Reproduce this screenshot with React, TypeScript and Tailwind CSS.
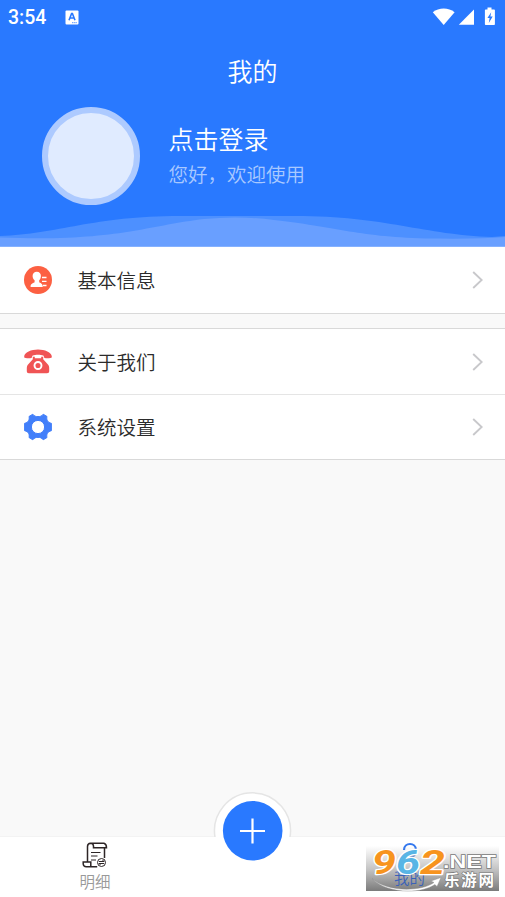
import React from 'react';

const cjk = "font-['Noto_Sans_CJK_SC',sans-serif] font-[350]";

function StatusBar() {
  return (
    <div className="flex h-[35px] items-center pl-[8px] pr-[9px]">
      <span className="w-[57px] font-['Roboto',sans-serif] text-[19.5px] font-medium leading-[35px]">3:54</span>
      <svg className="-mt-px" width="14" height="15" viewBox="0 0 14 15">
        <rect x="0.5" y="0.5" width="13" height="14" rx="1" fill="#fff" />
        <path d="M4 10.2 6.6 3.5h.8L10 10.2M5 8h4" fill="none" stroke="#2979ff" strokeWidth="1.6" />
        <path d="M7 12.7h5" stroke="#2979ff" strokeWidth="0.8" strokeDasharray="1.5 .6" />
      </svg>
      <svg className="-mt-[2px] ml-auto" width="64" height="20" viewBox="0 0 64 20">
        <path d="M0.8 5.2C7 .4 16.4 .4 22.6 5.2L11.7 17.9Z" fill="#fff" />
        <path d="M26.8 17.8H42V2.4Z" fill="#fff" />
        <path d="M55.5 .5h4v2h2.600a.8.8 0 0 1 .8.8v14a.8.8 0 0 1-.8.8h-8.400a.8.8 0 0 1-.8-.8V3.300a.8.8 0 0 1 .8-.8h1.800Z" fill="#fff" />
        <path d="M59.200 5.300 55.400 11h2.200l-.8 5 3.900-6.500h-2.300Z" fill="#2979ff" />
      </svg>
    </div>
  );
}

function Waves() {
  return (
    <svg className="mt-auto block" width="505" height="32" viewBox="0 0 505 32">
      <path d="M0 21C58 19 93 1 180 1C265 1 225 1 295 1C385 1 425 20 492 22L505 21V32H0Z" fill="#4d90ff" />
      <path d="M0 22.500C115 27 145 11 204 4Q240 .500 274 5C345 13 360 23 440 23.600Q480 24 505 22V32H0Z" fill="#699fff" />
      <path d="M0 31.500H505" stroke="#85b1ff" />
    </svg>
  );
}

function ProfileIcon() {
  return (
    <svg width="28" height="28" viewBox="0 0 28 28">
      <circle cx="14" cy="14" r="14" fill="#fc6042" />
      <path d="M12.800 5.800c2.600 0 4.100 1.800 4.100 4.200 0 1.700-.7 3.400-1.700 4.200v2c.8.800 3.500 1.200 3.500 3.800v1H6.600v-1c0-2.600 3.300-3 4-3.800v-2c-1.200-.8-2-2.500-2-4.200 0-2.400 1.600-4.200 4.200-4.200Z" fill="#fff" />
      <path d="M18 11.500h4.500M18 15.300h4.500M19 19.500h3.500" stroke="#fff" strokeWidth="1.300" />
    </svg>
  );
}

function PhoneIcon() {
  return (
    <svg width="28" height="28" viewBox="0 0 28 28">
      <path d="M.3 9.500C-.8 4.500 7 1.400 14 1.400S28.800 4.500 27.700 9.500c-.2.700-5.500 1-7 .4-1.300-.5-.3-2-1.500-2.500-2.400-1-8-1-10.400 0-1.200.5-.2 2-1.500 2.500-1.500.6-6.800.3-7-.4Z" fill="#f05455" />
      <path d="M8.800 8.700h2v1.500h6.400V8.700h2v2.500l4.500 5c1 1.200 1.500 2 1.500 4v2.800c0 1.500-.7 2.200-2.200 2.200H5c-1.500 0-2.200-.7-2.200-2.200v-2.800c0-2 .5-2.800 1.500-4l4.500-5Z" fill="#f05455" />
      <circle cx="14" cy="17.500" r="3.500" fill="none" stroke="#fff" strokeWidth="1.900" />
    </svg>
  );
}

function GearIcon() {
  return (
    <svg className="-mt-px" width="28" height="28" viewBox="0 0 28 28">
      <path fillRule="evenodd" strokeLinejoin="round" strokeWidth="1" stroke="#427ffa" d="M5 3.500 8.800 1.200c1.500 2 2.800 2.400 5.200 2.400s3.700-.4 5.200-2.400L23 3.500c-.8 3.400.6 6 4.400 6.800v7.400c-3.800.8-5.200 3.400-4.400 6.800l-3.800 2.300c-1.500-2-2.800-2.400-5.200-2.400s-3.700.4-5.200 2.400L5 24.500c.8-3.400-.6-6-4.400-6.800v-7.400C4.400 9.500 5.800 6.900 5 3.500ZM20.600 14a6.600 6.600 0 1 0-13.200 0 6.600 6.600 0 0 0 13.200 0Z" fill="#427ffa" />
    </svg>
  );
}

function Row({ icon, label, className }: { icon: React.ReactNode; label: string; className: string }) {
  return (
    <div className={'flex items-center bg-white pl-6 pr-[22px] ' + className}>
      {icon}
      <span className="ml-[25.500px] text-[19.500px] leading-7 text-[#2b2b2b]">{label}</span>
      <svg className="ml-auto" width="11" height="18" viewBox="0 0 11 18">
        <path d="M1.200 1 9.700 9 1.200 17" fill="none" stroke="#c8c8cb" strokeWidth="1.900" />
      </svg>
    </div>
  );
}

function ReceiptIcon() {
  return (
    <svg width="26" height="26" viewBox="0 0 26 26" fill="none" stroke="#2d2526" strokeWidth="1.500">
      <path d="M8.500 1.200H22q2.500.8 2.500 4.500H11.500V4Q11.300 1.200 8.500 1.200Q5.500 1.400 5.500 4.500V20H1.200v2q.3 2.700 3 2.700h11M5.500 20h3.300v4M22.500 6v10" />
      <path d="M9 10.500h9.500M9 14h6.500M9 18h5" strokeWidth="1.200" />
      <circle cx="19.500" cy="20.500" r="4" strokeWidth="1" />
      <path d="M17 19.500h5l-1.500-1.500M22 21.500h-5l1.500 1.500" strokeWidth="1" />
    </svg>
  );
}

function Watermark() {
  return (
    <svg className="absolute left-[366px] top-[9px] overflow-visible" width="133" height="45" viewBox="0 0 133 45">
      <defs>
        <linearGradient id="shade" x1="0" y1="0" x2="0" y2="1">
          <stop offset="0" stopColor="#777" stopOpacity="0" />
          <stop offset="0.500" stopColor="#777" stopOpacity=".42" />
          <stop offset="1" stopColor="#747474" stopOpacity=".95" />
        </linearGradient>
      </defs>
      <rect width="133" height="45" fill="url(#shade)" />
      <text x="28" y="38" fontSize="15.500" fill="#3a62b8">我的</text>
      <g fontFamily="Roboto, sans-serif" fontWeight="bold" fontStyle="italic" fontSize="33" stroke="#fff" strokeWidth="2.500" paintOrder="stroke" strokeLinejoin="round">
        <text x="6" y="28" textLength="24" lengthAdjust="spacingAndGlyphs" fill="#f7941e">9</text>
        <text x="30" y="28" textLength="24" lengthAdjust="spacingAndGlyphs" fill="#58b5e5">6</text>
        <text x="54" y="28" textLength="25" lengthAdjust="spacingAndGlyphs" fill="#f7941e">2</text>
      </g>
      <text x="77" y="22" textLength="53" lengthAdjust="spacingAndGlyphs" fontFamily="Liberation Sans, sans-serif" fontWeight="bold" fontSize="18.500" fill="#fff" stroke="#777" strokeWidth="1.300" paintOrder="stroke">.NET</text>
      <path d="M6 32.500C20 46 55 46 68 36.500l-3-1.500 10-3.500-4 9-2-2C53 49 19 47 6 32.500Z" fill="#fff" stroke="#888" strokeWidth=".4" />
      <text x="78" y="40" textLength="50" fontWeight="bold" fontSize="15.500" fill="#fff" stroke="#777" strokeWidth="1.200" paintOrder="stroke">乐游网</text>
    </svg>
  );
}

function BottomNav() {
  return (
    <nav className="relative mt-auto h-[61px] border-t border-[#f3f3f3] bg-white">
      <div className="flex h-full justify-between pl-[64px] pr-[64px]">
        <div className="flex w-[62px] flex-col items-center pt-[5px] text-[15.500px] text-[#999]">
          <ReceiptIcon />
          <span className="leading-[26px]">明细</span>
        </div>
        <div className="flex w-[62px] flex-col items-center pt-[5px]">
          <svg width="26" height="26" viewBox="0 0 26 26" fill="none" stroke="#3478ef" strokeWidth="2.200">
            <path d="M7 8C7 0 19 0 19 8" />
            <path d="M9 12q4 5 9 1M5 22q8-7 16 0" stroke="#6996da" />
          </svg>
        </div>
      </div>
      <svg className="absolute left-[213px] top-[-46px]" width="80" height="78" viewBox="0 0 80 78">
        <path d="M2 46A38 38 0 1 1 77 46V78H2Z" fill="#fff" />
        <path d="M2 46A38 38 0 1 1 77 46" fill="none" stroke="#e5e5e5" strokeWidth="1.500" />
        <circle cx="39.700" cy="39.700" r="29.800" fill="#2979ff" />
        <path d="M39.500 27.500v25M27 40h25" stroke="#fff" strokeWidth="2.200" />
      </svg>
      <Watermark />
    </nav>
  );
}

export default function App() {
  return (
    <div className={'flex h-[897px] w-[505px] flex-col overflow-hidden bg-[#f9f9f9] ' + cjk}>
      <header className="flex h-[247px] flex-col bg-[#2979ff] text-white">
        <StatusBar />
        <h1 className="h-[72px] text-center text-[25px] font-[350] leading-[70px]">我的</h1>
        <div className="flex pl-[42px]">
          <div className="size-[98px] rounded-full border-[6px] border-[#adcaff] bg-[#e0ebff]" />
          <div className="ml-[28.500px] pt-[12px]">
            <div className="text-[25px] leading-[38px]">点击登录</div>
            <div className="text-[19.500px] leading-[34px] text-[#a9c9ff]">您好，欢迎使用</div>
          </div>
        </div>
        <Waves />
      </header>
      <Row icon={<ProfileIcon />} label="基本信息" className="h-[67px] border-b border-[#d9d9d9]" />
      <div className="h-[14px]" />
      <Row icon={<PhoneIcon />} label="关于我们" className="h-[67px] border-b border-t border-b-[#e5e5e5] border-t-[#d9d9d9]" />
      <Row icon={<GearIcon />} label="系统设置" className="h-[65px] border-b border-[#d9d9d9]" />
      <BottomNav />
    </div>
  );
}
